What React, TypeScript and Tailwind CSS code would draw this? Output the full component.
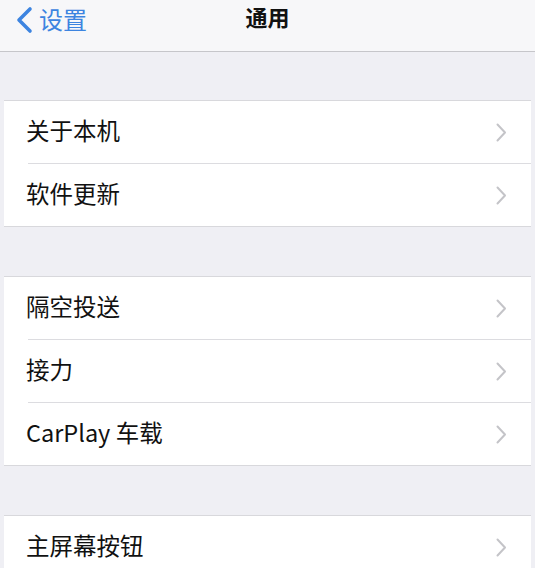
const groups: string[][] = [
  ['关于本机', '软件更新'],
  ['隔空投送', '接力', 'CarPlay 车载'],
  ['主屏幕按钮'],
];

function Row({ label, last }: { label: string; last: boolean }) {
  return (
    <div className={`flex items-center pl-[24px] ${last ? 'h-[62px]' : 'h-[63px]'}`}>
      <div className={`flex h-full flex-1 items-center pr-[24px] ${last ? '' : 'border-b border-[#dcdce0]'}`}>
        <span className="-ml-[2px] -mt-[2px] flex-1 text-[23.5px] leading-none text-[#111]">{label}</span>
        <svg width="11" height="19" viewBox="0 0 11 19" fill="none">
          <path d="M1.5 1.5 L9 9.5 L1.5 17.5" stroke="#c4c4c8" strokeWidth="2" strokeLinecap="round" strokeLinejoin="round" />
        </svg>
      </div>
    </div>
  );
}

export default function App() {
  return (
    <div
      className="h-[568px] w-[535px] overflow-hidden bg-[#efeff4]"
      style={{ fontFamily: '"Noto Sans CJK SC", "Noto Sans", sans-serif' }}
    >
      <div className="relative flex h-[52px] items-start border-b border-[#c6c6ca] bg-[#f7f7f9] pr-[5px]">
        <div className="flex items-center pl-[15px] pt-[6px]">
          <svg width="20" height="28" viewBox="0 0 20 28" fill="none">
            <path d="M15 3 L4 14 L15 25" stroke="#3d84e0" strokeWidth="3.6" strokeLinecap="round" strokeLinejoin="round" />
          </svg>
          <span className="-mt-[2px] ml-[4px] text-[24px] leading-none text-[#3d84e0]">设置</span>
        </div>
        <div className="absolute left-0 right-0 top-[5px] text-center text-[22px] font-bold leading-none text-[#111]">
          通用
        </div>
      </div>
      <div className="flex flex-col gap-[49px] pt-[48px]">
        {groups.map((g, gi) => (
          <div key={gi} className="mx-[4px] border-y border-[#d8d8dc] bg-white">
            {g.map((label, i) => (
              <Row key={label} label={label} last={i === g.length - 1} />
            ))}
          </div>
        ))}
      </div>
    </div>
  );
}
